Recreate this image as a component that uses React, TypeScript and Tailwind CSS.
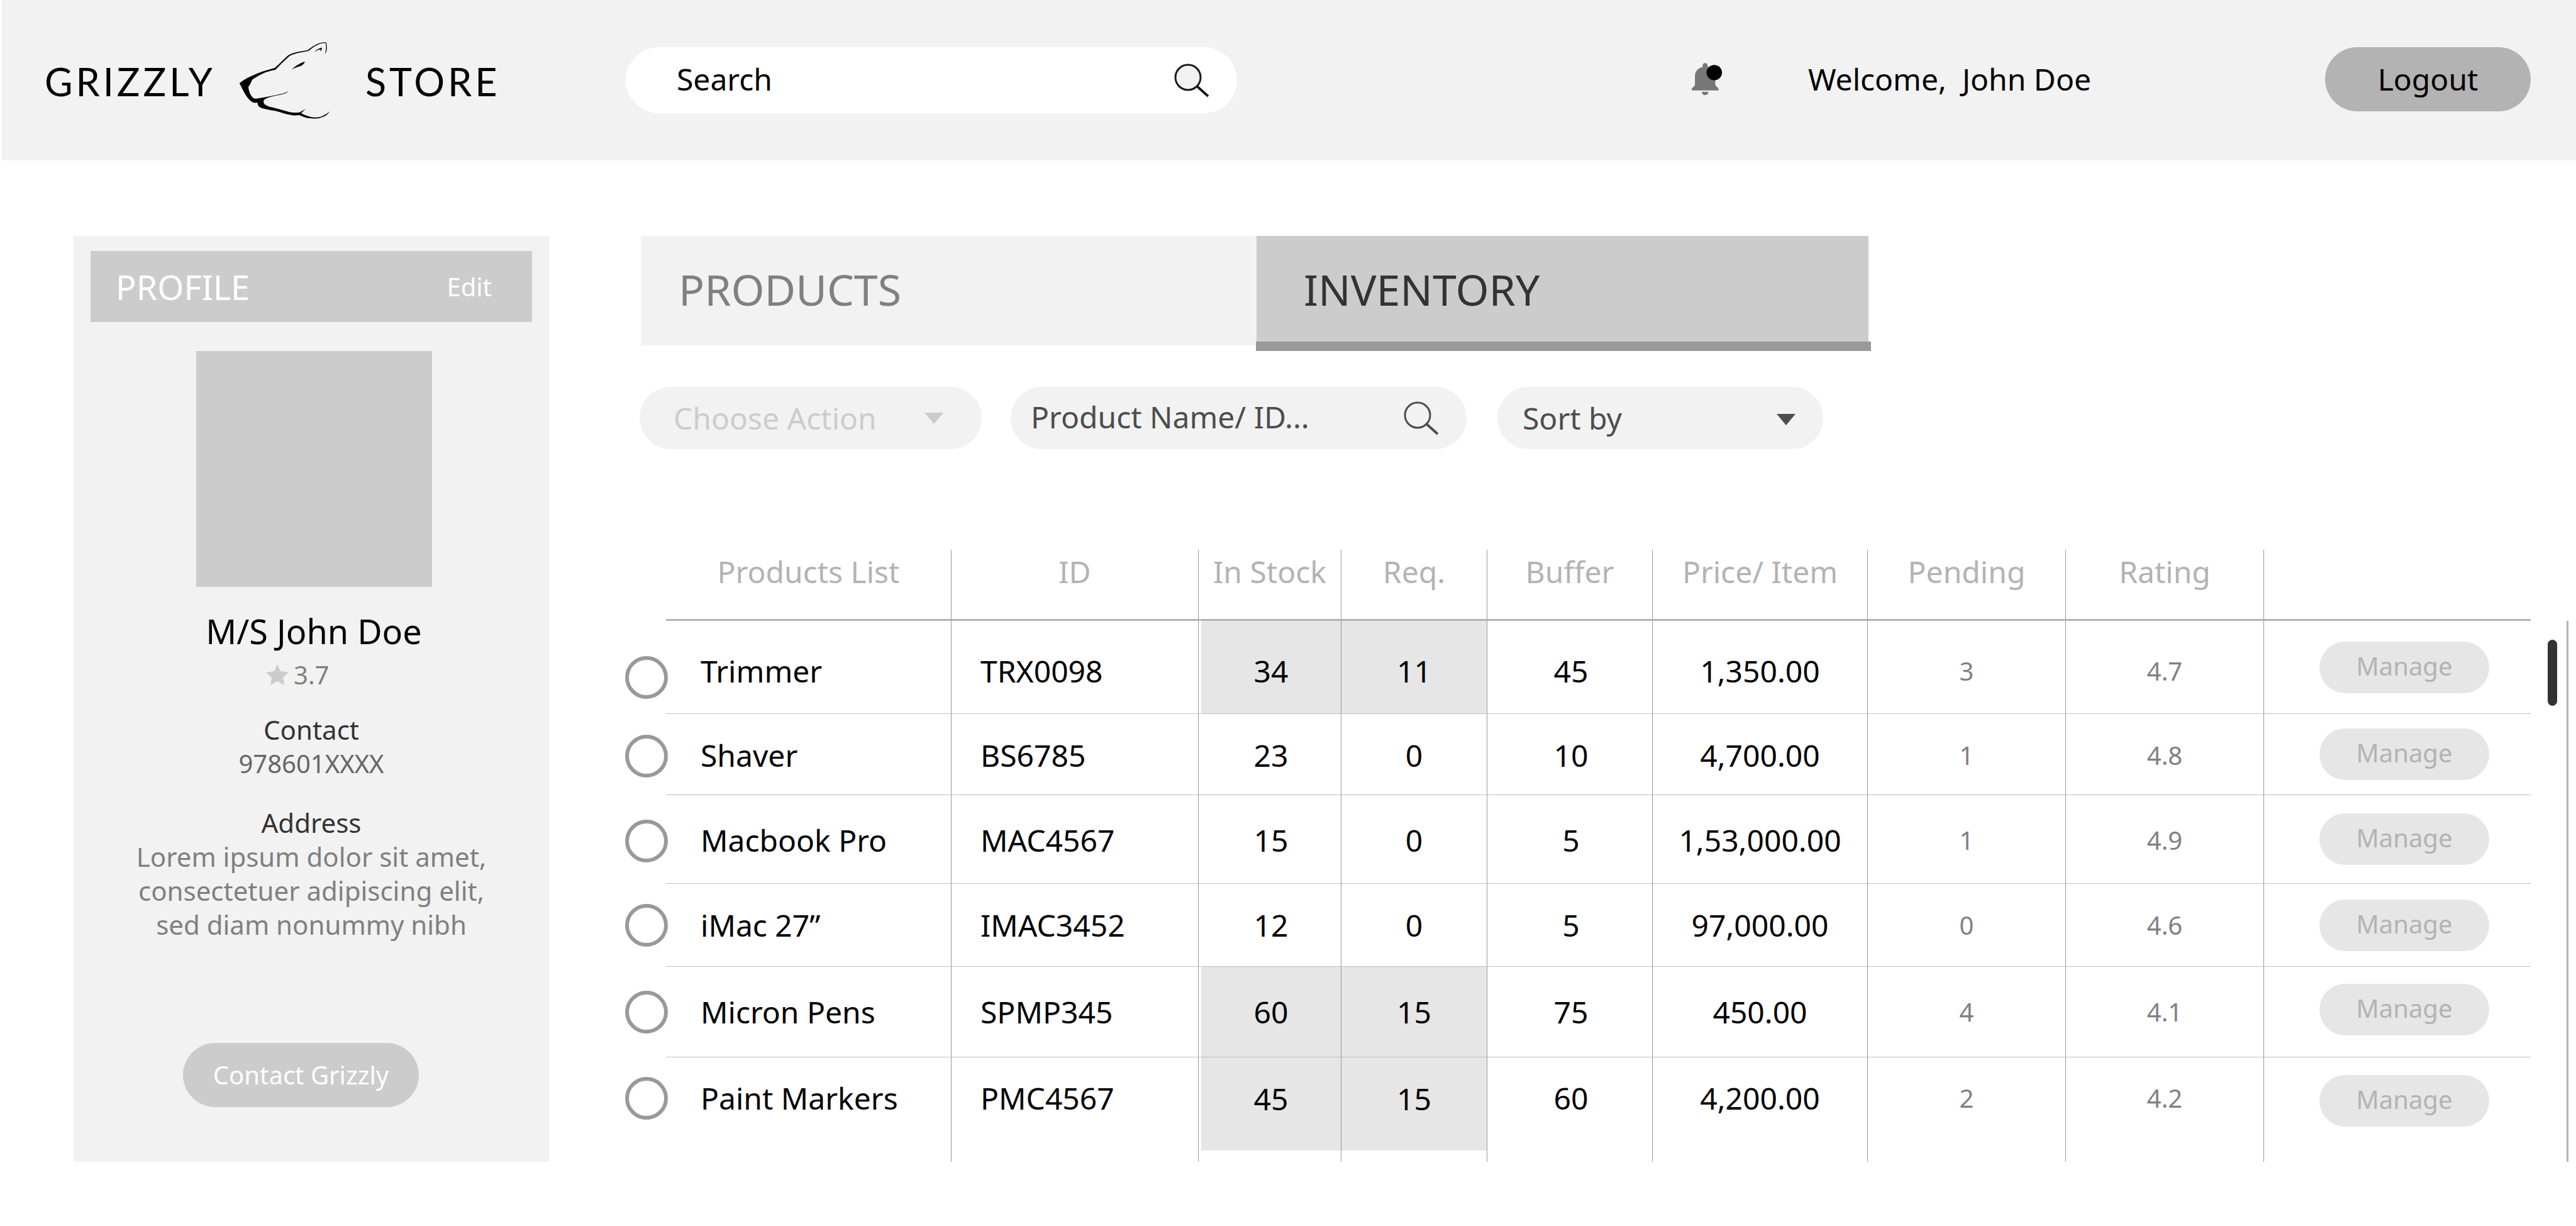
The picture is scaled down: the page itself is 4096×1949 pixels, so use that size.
import { useState } from "react";

type Product = {
  name: string;
  id: string;
  stock: number;
  required: number;
  buffer: number;
  price: string;
  pending: number;
  rating: string;
  low?: boolean;
  height: string;
  shift: string;
  pickShift: string;
  actionShift: string;
};

const products: Product[] = [
  { name: "Trimmer", id: "TRX0098", stock: 34, required: 11, buffer: 45, price: "1,350.00", pending: 3, rating: "4.7", low: true, height: "h-[148px]", shift: "pt-3", pickShift: "pt-8", actionShift: "" },
  { name: "Shaver", id: "BS6785", stock: 23, required: 0, buffer: 10, price: "4,700.00", pending: 1, rating: "4.8", height: "h-[129px]", shift: "pt-1", pickShift: "pt-1", actionShift: "" },
  { name: "Macbook Pro", id: "MAC4567", stock: 15, required: 0, buffer: 5, price: "1,53,000.00", pending: 1, rating: "4.9", height: "h-[141px]", shift: "pt-1", pickShift: "pt-1", actionShift: "" },
  { name: "iMac 27”", id: "IMAC3452", stock: 12, required: 0, buffer: 5, price: "97,000.00", pending: 0, rating: "4.6", height: "h-[132px]", shift: "", pickShift: "", actionShift: "" },
  { name: "Micron Pens", id: "SPMP345", stock: 60, required: 15, buffer: 75, price: "450.00", pending: 4, rating: "4.1", low: true, height: "h-[144px]", shift: "", pickShift: "", actionShift: "pb-2" },
  { name: "Paint Markers", id: "PMC4567", stock: 45, required: 15, buffer: 60, price: "4,200.00", pending: 2, rating: "4.2", low: true, height: "h-[166px]", shift: "pb-9", pickShift: "pb-9", actionShift: "pb-7" },
];

function SearchIcon({ color, fill }: { color: string; fill: string }) {
  return (
    <svg width="56" height="54" viewBox="0 0 56 54" aria-hidden="true">
      <line x1="35" y1="35" x2="54" y2="52" stroke={color} strokeWidth="4" />
      <circle cx="22" cy="22" r="20" fill={fill} stroke={color} strokeWidth="3" />
    </svg>
  );
}

function BearLogo() {
  return (
    <svg width="145" height="124" viewBox="85 95 605 517" aria-hidden="true">
      <path d="M88 371Q112 352 140 337Q178 317 215 303Q240 294 265 287L322 270Q345 250 365 230L410 188Q418 182 425 179Q450 170 475 164L542 152Q556 139 575 127Q602 109 630 103Q648 99 663 101Q668 115 668 130Q668 146 665 160Q661 170 655 179Q659 164 661 150Q663 137 662 125Q662 114 660 106Q646 104 632 107Q608 114 585 128Q564 142 547 157L480 170Q452 176 428 187Q418 192 410 200L365 243L328 282Q292 289 258 300Q212 320 175 346Q164 362 160 378Q152 388 147 397Q150 420 158 440Q168 458 180 470Q190 474 200 473Q235 469 270 462Q326 452 380 439Q398 432 414 422Q404 432 390 440Q358 449 325 455Q298 461 275 468Q259 474 252 482Q247 491 248 500Q251 507 256 512Q270 521 285 527Q312 532 340 540Q370 548 400 557Q422 564 445 566Q467 567 485 565Q508 554 527 541Q514 555 497 570Q520 582 545 590Q568 598 590 599Q609 598 625 594Q644 588 660 578Q674 569 687 558Q678 572 665 583Q650 593 635 598Q618 604 600 606Q580 607 560 604Q537 602 515 595Q500 589 485 583Q463 586 440 584Q412 581 385 573Q357 563 330 556Q285 549 240 538Q226 533 215 525Q208 513 207 500Q193 503 180 500Q169 495 160 487Q143 470 130 450Q114 426 103 400Z" />
      <path d="M433 282Q447 267 465 255Q487 241 510 231L524 229Q515 243 503 253Q488 260 470 265Q450 272 433 282Z" />
      <path d="M585 164Q594 154 605 147Q620 139 636 135Q635 142 633 148L627 162Q627 155 625 148Q614 148 605 152Z" />
    </svg>
  );
}

function BellIcon() {
  return (
    <svg width="50" height="52" viewBox="54 64 208 216" aria-hidden="true">
      <path fill="#777" d="M126 90V80Q128 66 142 65Q157 66 159 80V90Q210 100 210 150V212L231 233V246H54V233L75 212V145Q80 102 126 90Z" />
      <path fill="#777" d="M120 255H165Q163 268 152 276H132Q122 268 120 255Z" />
      <circle cx="203" cy="128" r="51" fill="#000" />
    </svg>
  );
}

function Caret({ color }: { color: string }) {
  return (
    <svg width="30" height="18" viewBox="0 0 30 18" aria-hidden="true">
      <path d="M0 0H30L15 18Z" fill={color} />
    </svg>
  );
}

function Header() {
  return (
    <header className="ml-[3px] flex h-[255px] items-center bg-[#f2f2f2] pr-[72px] pl-[68px]">
      <a href="#" aria-label="Grizzly Store" className="flex w-[924px] shrink-0 items-center font-[Lato,sans-serif] text-[61px]">
        <span className="w-[309px] pt-1 tracking-[5px]">GRIZZLY</span>
        <BearLogo />
        <span className="ml-[56px] pt-1 tracking-[5px]">STORE</span>
      </a>
      <label className="flex h-[105px] w-[972px] items-center rounded-full bg-white pr-[44px] pl-[81px]">
        <input type="search" aria-label="Search" placeholder="Search" className="min-w-0 flex-1 bg-transparent pb-1 outline-none placeholder:text-black" />
        <SearchIcon color="#1a1a1a" fill="#f2f2f2" />
      </label>
      <div className="ml-auto flex items-center pb-1">
        <button type="button" aria-label="Notifications" className="mr-[135px]">
          <BellIcon />
        </button>
        <span className="whitespace-pre">Welcome,  John Doe</span>
        <button type="button" className="ml-[372px] h-[102px] w-[327px] rounded-full bg-[#b3b3b3]">
          Logout
        </button>
      </div>
    </header>
  );
}

function Profile() {
  return (
    <aside className="flex w-[756px] shrink-0 flex-col bg-[#f2f2f2] pt-6 pb-[87px] text-center text-[42px] leading-[54px]">
      <div className="mx-[27px] flex h-[113px] items-center justify-between bg-[#ccc] pr-[64px] pl-10 text-white">
        <h2 className="text-[54px]">PROFILE</h2>
        <a href="#" className="text-[40px]">Edit</a>
      </div>
      <div role="img" aria-label="Profile picture" className="mt-[46px] ml-[195px] size-[375px] bg-[#ccc]" />
      <h3 className="mt-[38px] pl-2 text-[54px] leading-[64px]">M/S John Doe</h3>
      <p className="mt-[11px] flex items-center gap-2 pl-[306px] text-[40px] text-[#808080]">
        <svg width="36" height="34" viewBox="0 0 36 34" aria-hidden="true">
          <path fill="#ccc" d="M18 0L23 11L36 13L27 21L29 33L18 27L7 33L9 21L0 13L13 11Z" />
        </svg>
        3.7
      </p>
      <h4 className="mt-[33px] text-[#333]">Contact</h4>
      <p className="text-[40px] text-[#666]">978601XXXX</p>
      <h4 className="mt-10 text-[#333]">Address</h4>
      <p className="text-[#808080]">
        Lorem ipsum dolor sit amet,
        <br />
        consectetuer adipiscing elit,
        <br />
        sed diam nonummy nibh
      </p>
      <button type="button" className="mt-[161px] ml-[174px] h-[102px] w-[375px] rounded-full bg-[#ccc] text-[40px] text-white">
        Contact Grizzly
      </button>
    </aside>
  );
}

function Tabs() {
  return (
    <div role="tablist" className="flex h-[174px] pl-[25px] text-[68px]">
      <button type="button" role="tab" aria-selected="false" className="w-[979px] bg-[#f2f2f2] pb-1 pl-[60px] text-left text-[#808080]">
        PRODUCTS
      </button>
      <button type="button" role="tab" aria-selected="true" className="relative w-[973px] bg-[#ccc] pb-1 pl-[75px] text-left text-[#333]">
        INVENTORY
        <span className="absolute -right-1 -bottom-[9px] -left-px h-[15px] bg-[#999]" />
      </button>
    </div>
  );
}

function Filters() {
  return (
    <div className="mt-[66px] flex h-[99px] pl-[23px] text-[#4d4d4d]">
      <div className="relative w-[544px]">
        <select disabled aria-label="Choose Action" className="size-full appearance-none rounded-full bg-[#f2f2f2] pl-[54px] leading-[72px] text-[#ccc] opacity-100">
          <option>Choose Action</option>
        </select>
        <span className="pointer-events-none absolute inset-y-0 right-[61px] flex items-center">
          <Caret color="#ccc" />
        </span>
      </div>
      <label className="ml-[46px] flex w-[725px] items-center rounded-full bg-[#f2f2f2] pr-[44px] pl-8">
        <input type="search" aria-label="Product Name/ ID" placeholder="Product Name/ ID..." className="min-w-0 flex-1 bg-transparent pb-1 outline-none placeholder:text-[#4d4d4d]" />
        <SearchIcon color="#4d4d4d" fill="none" />
      </label>
      <div className="relative ml-[49px] w-[518px]">
        <select aria-label="Sort by" className="size-full appearance-none rounded-full bg-[#f2f2f2] pl-10 leading-[72px]">
          <option>Sort by</option>
        </select>
        <span className="pointer-events-none absolute inset-y-0 right-[44px] flex items-center pt-1">
          <Caret color="#4d4d4d" />
        </span>
      </div>
    </div>
  );
}

const headCell = "h-[113px] border-r border-r-[#999] border-b-3 border-b-[#b3b3b3] align-top leading-[70px] font-normal";
const line = "border-r border-r-[#999] border-b border-b-[#c0c0c0]";

function ProductRow({ item, last, checked, onPick }: { item: Product; last: boolean; checked: boolean; onPick: () => void }) {
  const cell = last ? "border-r border-r-[#999]" : line;
  const shade = item.low ? "bg-[#e6e6e6]" : "";
  const inset = last ? "pb-[18px]" : "";
  const innerShift = last ? "pb-4" : item.shift;
  return (
    <tr className={item.height}>
      <td className={item.pickShift}>
        <input
          type="radio"
          name="product"
          aria-label={item.name}
          checked={checked}
          onChange={onPick}
          className="block size-[68px] appearance-none rounded-full border-6 border-[#999] bg-white checked:bg-[#999]"
        />
      </td>
      <td className={`${cell} ${item.shift} pl-[55px]`}>{item.name}</td>
      <td className={`${cell} ${item.shift} pl-[46px]`}>{item.id}</td>
      <td className={`${cell} ${inset} h-[inherit] pl-1 text-center`}>
        <div className={`flex h-full items-center justify-center ${shade} ${innerShift}`}>{item.stock}</div>
      </td>
      <td className={`${cell} ${inset} h-[inherit] text-center`}>
        <div className={`flex h-full items-center justify-center ${shade} ${innerShift}`}>{item.required}</div>
      </td>
      <td className={`${cell} ${item.shift} pl-1 text-center`}>{item.buffer}</td>
      <td className={`${cell} ${item.shift} text-center`}>{item.price}</td>
      <td className={`${cell} ${item.shift} text-center text-[40px] text-[#808080]`}>{item.pending}</td>
      <td className={`${cell} ${item.shift} text-center text-[40px] text-[#808080]`}>{item.rating}</td>
      <td className={`${last ? "" : "border-b border-b-[#c0c0c0]"} ${item.actionShift} pl-[22px] text-center`}>
        <button type="button" className="h-[82px] w-[270px] rounded-full bg-[#e6e6e6] pb-1 text-[40px] text-[#b3b3b3]">
          Manage
        </button>
      </td>
    </tr>
  );
}

function Inventory() {
  const [picked, setPicked] = useState<string | null>(null);
  return (
    <div className="mt-[160px] flex pr-3">
      <div className="min-w-0 flex-1">
        <table className="w-full table-fixed border-separate border-spacing-0 leading-[60px]">
          <colgroup>
            <col className="w-[65px]" />
            <col className="w-[454px]" />
            <col className="w-[393px]" />
            <col className="w-[227px]" />
            <col className="w-[232px]" />
            <col className="w-[263px]" />
            <col className="w-[342px]" />
            <col className="w-[315px]" />
            <col className="w-[315px]" />
            <col />
          </colgroup>
          <thead className="text-[#b3b3b3]">
            <tr>
              <td />
              <th scope="col" className={headCell}>Products List</th>
              <th scope="col" className={headCell}>ID</th>
              <th scope="col" className={headCell}>In Stock</th>
              <th scope="col" className={headCell}>Req.</th>
              <th scope="col" className={headCell}>Buffer</th>
              <th scope="col" className={headCell}>Price/ Item</th>
              <th scope="col" className={headCell}>Pending</th>
              <th scope="col" className={headCell}>Rating</th>
              <td className="border-b-3 border-b-[#b3b3b3]" />
            </tr>
          </thead>
          <tbody>
            {products.map((item, index) => (
              <ProductRow
                key={item.id}
                item={item}
                last={index === products.length - 1}
                checked={picked === item.id}
                onPick={() => setPicked(item.id)}
              />
            ))}
          </tbody>
        </table>
      </div>
      <div className="mt-[113px] ml-[27px] flex border-r-3 border-[#b3b3b3] pt-[30px] pr-[15px]">
        <div className="h-[105px] w-[15px] rounded-full bg-[#333]" />
      </div>
    </div>
  );
}

export default function App() {
  return (
    <div className="min-h-screen bg-white font-['Noto_Sans',sans-serif] text-5xl text-black">
      <Header />
      <main className="flex items-start pt-[120px] pl-[117px]">
        <Profile />
        <section aria-label="Inventory" className="ml-[121px] min-w-0 flex-1">
          <Tabs />
          <Filters />
          <Inventory />
        </section>
      </main>
    </div>
  );
}
